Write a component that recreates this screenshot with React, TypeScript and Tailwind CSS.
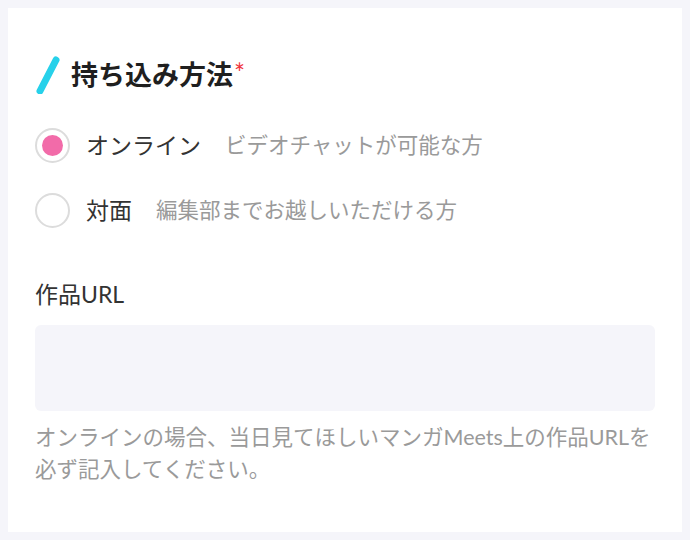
import React from "react";

const Radio = ({ checked, label, note }: { checked?: boolean; label: string; note: string }) => {
  return (
    <label className="flex items-center h-[36px] cursor-pointer">
      <span className="flex justify-center items-center w-[35px] h-[35px] rounded-full border-2 border-[#dcdcdc] bg-white shrink-0">
        {checked && <span className="w-[21px] h-[21px] rounded-full bg-[#f26ba9]" />}
      </span>
      <span className="ml-[16px] text-[23px] text-[#333333]">{label}</span>
      <span className="ml-[24px] text-[21.5px] text-[#9a9a9a]">{note}</span>
    </label>
  );
};

export default function App() {
  return (
    <div
      className="min-h-[540px] bg-[#f5f5fa] p-[8px]"
      style={{ fontFamily: 'Lato, "Noto Sans CJK JP", sans-serif' }}
    >
      <div className="bg-white h-[524px] px-[27px] pt-[46px]">
        <div className="flex items-center h-[40px]">
          <svg width="30" height="40" viewBox="0 0 30 40" className="shrink-0">
            <line x1="21" y1="6" x2="5" y2="37" stroke="#27d1ea" strokeWidth="7" strokeLinecap="round" />
          </svg>
          <h2 className="ml-[6px] text-[27px] font-bold text-[#1f1f1f] leading-none">
            持ち込み方法
          </h2>
          <span className="text-[26px] leading-none text-[#f0343c] self-start mt-[6px] ml-[1px]">*</span>
        </div>

        <div className="mt-[33px] flex flex-col gap-[29px]">
          <Radio checked label="オンライン" note="ビデオチャットが可能な方" />
          <Radio label="対面" note="編集部までお越しいただける方" />
        </div>

        <div className="mt-[55px] text-[23px] text-[#333333] leading-none">作品URL</div>
        <div className="mt-[19px] h-[86px] rounded-[6px] bg-[#f5f5fa]" />
        <p className="mt-[10px] text-[21.5px] leading-[32px] text-[#9a9a9a]">
          オンラインの場合、当日見てほしいマンガMeets上の作品URLを
          <br />
          必ず記入してください。
        </p>
      </div>
    </div>
  );
}
